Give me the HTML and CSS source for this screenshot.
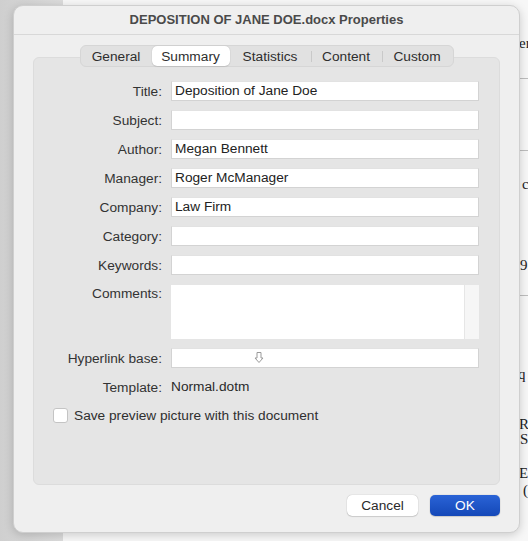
FILE: index.html
```html
<!DOCTYPE html>
<html lang="en">
<head>
    <meta charset="UTF-8">
    <title>DEPOSITION OF JANE DOE.docx Properties</title>

    <link rel="stylesheet" href="styles.css">
</head>
<body>
<div class="desk">
    <div class="sidebar"></div>
    <div class="doc">
        <span class="frag" style="top: 35px; left: 519px;">er</span>
        <hr class="rule" style="top: 78px;">
        <hr class="rule" style="top: 150px;">
        <span class="frag" style="top: 176px; left: 522px;">c</span>
        <span class="frag" style="top: 257px; left: 520px;">9</span>
        <hr class="rule" style="top: 295px;">
        <span class="frag" style="top: 366px; left: 518px;">q</span>
        <span class="frag" style="top: 416px; left: 519px;">R</span>
        <span class="frag" style="top: 431px; left: 520px;">S</span>
        <span class="frag" style="top: 465px; left: 519px;">E</span>
        <span class="frag" style="top: 482px; left: 523px;">(</span>
    </div>
</div>

<div class="dialog">
    <div class="titlebar">DEPOSITION OF JANE DOE.docx Properties</div>

    <div class="tabs">
        <span class="tab">General</span>
        <span class="tab selected">Summary</span>
        <span class="tab">Statistics</span>
        <span class="tab sep">Content</span>
        <span class="tab sep">Custom</span>
    </div>

    <div class="panel">
        <div class="form">
            <label class="label">Title:</label>
            <div class="field">Deposition of Jane Doe</div>

            <label class="label">Subject:</label>
            <div class="field"></div>

            <label class="label">Author:</label>
            <div class="field">Megan Bennett</div>

            <label class="label">Manager:</label>
            <div class="field">Roger McManager</div>

            <label class="label">Company:</label>
            <div class="field">Law Firm</div>

            <label class="label">Category:</label>
            <div class="field"></div>

            <label class="label">Keywords:</label>
            <div class="field"></div>

            <label class="label top">Comments:</label>
            <div class="area"><div class="scroll"></div></div>

            <label class="label">Hyperlink base:</label>
            <div class="field cursor-host">
                <svg class="cursor" width="10" height="13" viewBox="0 0 10 13">
                    <path d="M3 1.5 H7 V7 H9 L5 11.5 L1 7 H3 Z" fill="#fff" stroke="#9a9a9a" stroke-width="1"/>
                </svg>
            </div>

            <span class="label">Template:</span>
            <span class="value">Normal.dotm</span>
        </div>

        <div class="check-row">
            <span class="checkbox"></span>
            <span>Save preview picture with this document</span>
        </div>
    </div>

    <div class="buttons">
        <button class="btn">Cancel</button>
        <button class="btn primary">OK</button>
    </div>
</div>
</body>
</html>
```

FILE: styles.css
```css
html, body {
    margin: 0;
    height: 100%;
}

body {
    font-family: "Liberation Sans", Arial, sans-serif;
    font-size: 13.7px;
    color: #2f2f2f;
    background: #f3f3f3;
    overflow: hidden;
}

/*Фон*/

.desk {
    position: absolute;
    inset: 0;
    display: flex;
}

.sidebar {
    width: 63px;
    background: linear-gradient(to right, #cfcfcf, #dcdcdc);
}

.doc {
    flex: 1;
    background: #f7f7f7;
}

.frag {
    position: absolute;
    font-family: "Liberation Serif", serif;
    font-size: 15px;
    color: #222;
}

.rule {
    position: absolute;
    left: 519px;
    width: 12px;
    margin: 0;
    border: 0;
    border-top: 1px solid #bdbdbd;
}

/*Окно*/

.dialog {
    position: absolute;
    left: 13px;
    top: 5px;
    width: 507px;
    height: 528px;
    box-sizing: border-box;
    border-radius: 10px;
    background: #efefef;
    border: 1px solid #cfcfcf;
    box-shadow: 0 2px 10px rgba(0, 0, 0, 0.18);
    display: flex;
    flex-direction: column;
}

.titlebar {
    height: 28px;
    line-height: 27px;
    text-align: center;
    font-size: 13px;
    font-weight: bold;
    color: #4a4a4a;
    border-bottom: 1px solid #d8d8d8;
}

.tabs {
    align-self: center;
    display: flex;
    height: 20px;
    margin-top: 10px;
    margin-bottom: -10px;
    position: relative;
    z-index: 1;
    background: #e1e1e1;
    border: 1px solid #d6d6d6;
    border-radius: 6px;
}

.tab {
    display: flex;
    align-items: center;
    justify-content: center;
    padding: 0 12px;
    color: #2e2e2e;
    position: relative;
}

.tab.sep::before {
    content: "";
    position: absolute;
    left: 0;
    top: 5px;
    height: 11px;
    border-left: 1px solid #c9c9c9;
}

.tab:nth-child(1) { width: 47px; }
.tab:nth-child(2) { width: 54px; }
.tab:nth-child(3) { width: 57px; }
.tab:nth-child(4) { width: 47px; }
.tab:nth-child(5) { width: 47px; }

.tab.selected {
    background: white;
    border-radius: 5px;
    box-shadow: 0 0 1px rgba(0, 0, 0, 0.25), 0 1px 1px rgba(0, 0, 0, 0.08);
}

.panel {
    margin: 0 19px;
    height: 428px;
    box-sizing: border-box;
    background: #e5e5e5;
    border: 1px solid #dcdcdc;
    border-radius: 6px;
    padding-top: 23px;
}

.form {
    display: grid;
    grid-template-columns: 128px 308px;
    column-gap: 9px;
    row-gap: 9px;
    align-items: center;
}

.label {
    text-align: right;
    color: #333;
}

.label.top {
    align-self: start;
    margin-top: 2px;
}

.field {
    height: 20px;
    box-sizing: border-box;
    background: white;
    border: 1px solid #d3d3d3;
    border-top-color: #e2e2e2;
    padding: 0 3px;
    line-height: 18px;
    color: #222;
}

.cursor-host {
    position: relative;
}

.cursor {
    position: absolute;
    left: 82px;
    top: 2px;
}

.area {
    height: 54px;
    margin-top: 1px;
    background: white;
    display: flex;
    justify-content: flex-end;
}

.scroll {
    width: 14px;
    background: #f6f6f6;
    border-left: 1px solid #e6e6e6;
}

.value {
    color: #2a2a2a;
    line-height: 20px;
}

.check-row {
    display: flex;
    align-items: center;
    gap: 6px;
    margin: 11px 0 0 19px;
    color: #2f2f2f;
}

.checkbox {
    width: 13px;
    height: 13px;
    background: white;
    border: 1px solid #c4c4c4;
    border-radius: 3px;
}

.buttons {
    display: flex;
    justify-content: flex-end;
    gap: 12px;
    margin: 10px 19px 0 0;
}

.btn {
    font-family: inherit;
    font-size: 13.7px;
    height: 21px;
    width: 71px;
    border: 0;
    border-radius: 5px;
    background: white;
    color: #2a2a2a;
    box-shadow: 0 0 1px rgba(0, 0, 0, 0.35), 0 1px 1px rgba(0, 0, 0, 0.12);
    padding: 0;
}

.btn.primary {
    width: 70px;
    color: white;
    background: linear-gradient(to bottom, #2a63d6, #1448b8);
}
```
